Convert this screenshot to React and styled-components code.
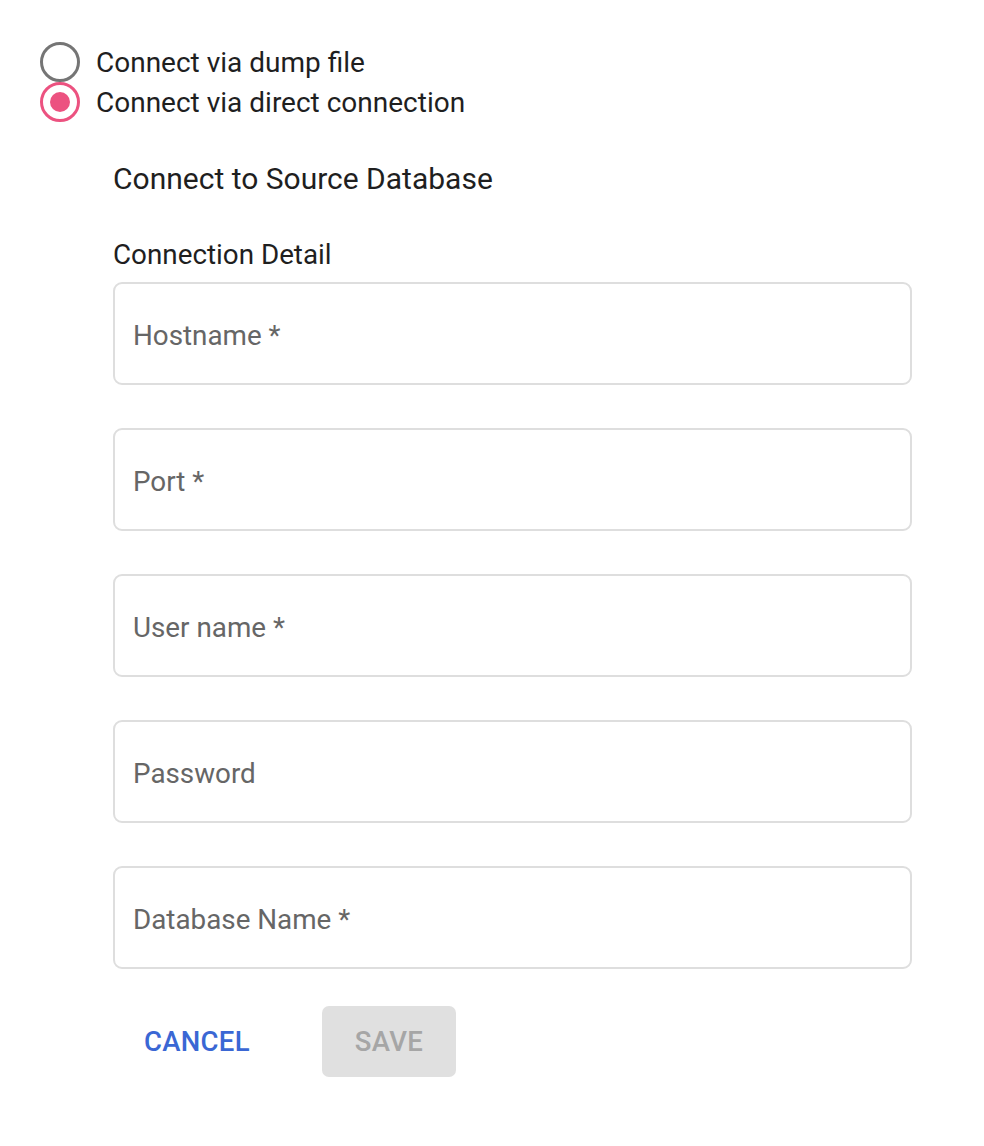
import React from "react";
import styled, { createGlobalStyle } from "styled-components";

const Global = createGlobalStyle`
  html, body { margin: 0; padding: 0; background: #fff; }
  body { font-family: Roboto, "Liberation Sans", Arial, sans-serif; color: #1f1f1f; }
`;

const Page = styled.div`
  padding: 42px 0 0 40px;
  width: 984px;
  box-sizing: border-box;
`;

const RadioGroup = styled.div`
  display: flex;
  flex-direction: column;
`;

const RadioRow = styled.label`
  display: flex;
  align-items: center;
  height: 40px;
  gap: 16px;
  font-size: 28px;
  color: #1f1f1f;
`;

const RadioCircle = styled.span`
  box-sizing: border-box;
  width: 40px;
  height: 40px;
  border-radius: 50%;
  border: 3.5px solid ${(p) => (p.checked ? "#ec5280" : "#757575")};
  display: flex;
  align-items: center;
  justify-content: center;
  &::after {
    content: "";
    display: ${(p) => (p.checked ? "block" : "none")};
    width: 20px;
    height: 20px;
    border-radius: 50%;
    background: #ec5280;
  }
`;

const Form = styled.div`
  margin-left: 73px;
  width: 799px;
  display: flex;
  flex-direction: column;
`;

const Heading = styled.div`
  font-size: 30px;
  margin-top: 41px;
  line-height: 32px;
`;

const SubHeading = styled.div`
  font-size: 27.8px;
  margin-top: 44px;
  line-height: 32px;
`;

const Fields = styled.div`
  display: flex;
  flex-direction: column;
  gap: 43px;
  margin-top: 11px;
`;

const Field = styled.div`
  box-sizing: border-box;
  height: 103px;
  border: 2px solid #dedede;
  border-radius: 9px;
  display: flex;
  align-items: center;
  padding: 4px 0 0 18px;
  font-size: 27.8px;
  color: #666;
`;

const Actions = styled.div`
  display: flex;
  align-items: center;
  margin-top: 37px;
  margin-left: -1px;
  gap: 40px;
`;

const Button = styled.button`
  font-family: Roboto, "Liberation Sans", Arial, sans-serif;
  font-size: 27.5px;
  font-weight: 500;
  border: none;
  border-radius: 7px;
  height: 71px;
  padding: 0 ${(p) => (p.disabled ? 33 : 32)}px;
  letter-spacing: 0.3px;
  background: ${(p) => (p.disabled ? "#e0e0e0" : "transparent")};
  color: ${(p) => (p.disabled ? "#a6a6a6" : "#3a67d4")};
`;

const fields = ["Hostname *", "Port *", "User name *", "Password", "Database Name *"];

export default function App() {
  return (
    <Page>
      <Global />
      <RadioGroup>
        <RadioRow>
          <RadioCircle />
          Connect via dump file
        </RadioRow>
        <RadioRow>
          <RadioCircle checked />
          Connect via direct connection
        </RadioRow>
      </RadioGroup>
      <Form>
        <Heading>Connect to Source Database</Heading>
        <SubHeading>Connection Detail</SubHeading>
        <Fields>
          {fields.map((f) => (
            <Field key={f}>{f}</Field>
          ))}
        </Fields>
        <Actions>
          <Button>CANCEL</Button>
          <Button disabled>SAVE</Button>
        </Actions>
      </Form>
    </Page>
  );
}
